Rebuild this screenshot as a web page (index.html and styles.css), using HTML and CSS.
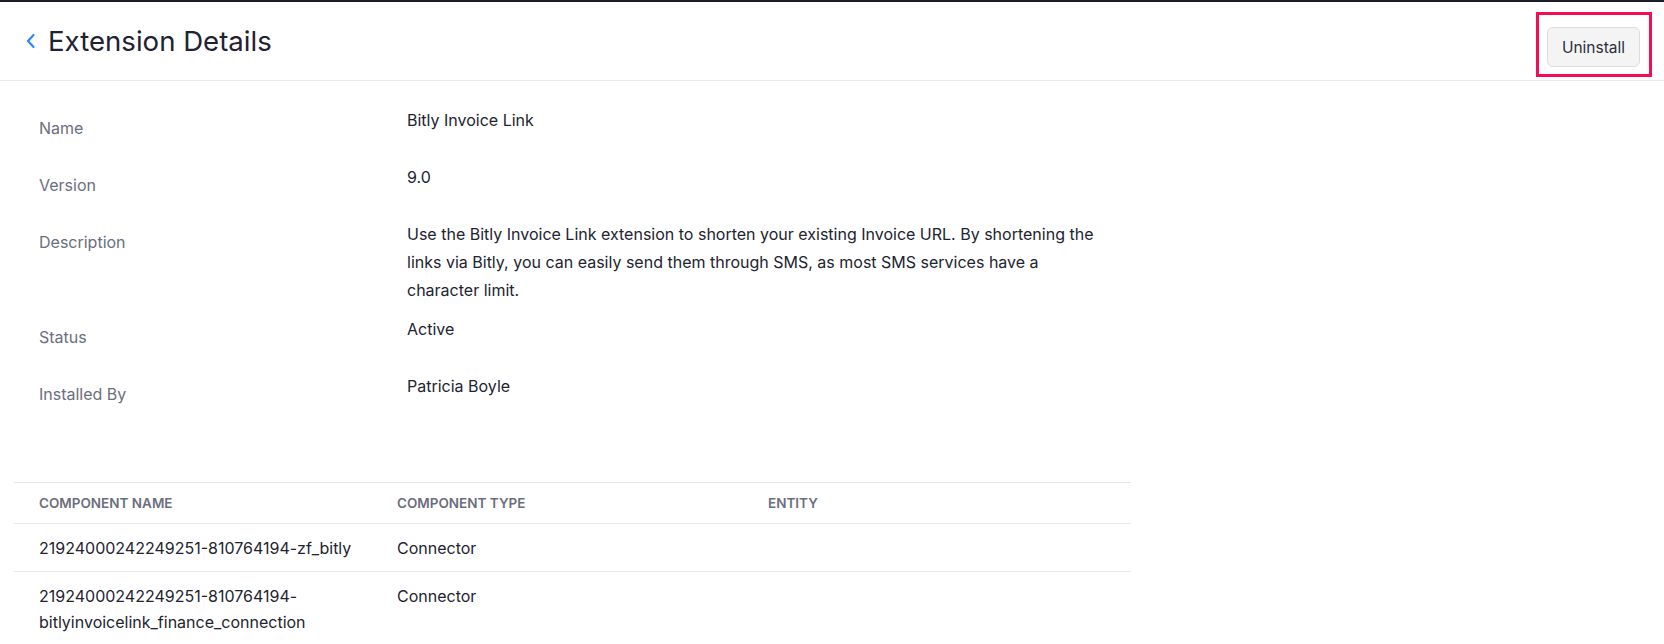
FILE: index.html
```html
<!DOCTYPE html>
<html>
<head>
<meta charset="utf-8">
<title>Extension Details</title>
<link rel="stylesheet" href="styles.css">
</head>
<body>
<div class="page">
  <header class="header">
    <div class="title-wrap">
      <svg class="back" width="12" height="16" viewBox="0 0 12 16"><path d="M8.5 2 L3 8 L8.5 14" fill="none" stroke="#2a8af5" stroke-width="2.2" stroke-linecap="round" stroke-linejoin="round"/></svg>
      <h1 class="title">Extension Details</h1>
    </div>
    <div class="btn-wrap">
      <button class="btn">Uninstall</button>
      <div class="highlight"></div>
    </div>
  </header>

  <section class="details">
    <div class="row"><div class="label">Name</div><div class="value">Bitly Invoice Link</div></div>
    <div class="row"><div class="label">Version</div><div class="value">9.0</div></div>
    <div class="row"><div class="label">Description</div><div class="value">Use the Bitly Invoice Link extension to shorten your existing Invoice URL. By shortening the links via Bitly, you can easily send them through SMS, as most SMS services have a character limit.</div></div>
    <div class="row"><div class="label">Status</div><div class="value">Active</div></div>
    <div class="row"><div class="label">Installed By</div><div class="value">Patricia Boyle</div></div>
  </section>

  <table class="table">
    <colgroup><col class="c1"><col class="c2"><col class="c3"></colgroup>
    <thead>
      <tr><th>Component Name</th><th>Component Type</th><th>Entity</th></tr>
    </thead>
    <tbody>
      <tr><td>21924000242249251-810764194-zf_bitly</td><td>Connector</td><td></td></tr>
      <tr><td>21924000242249251-810764194-bitlyinvoicelink_finance_connection</td><td>Connector</td><td></td></tr>
    </tbody>
  </table>
</div>
</body>
</html>
```
FILE: styles.css
```css
* { box-sizing: border-box; }
html, body { margin: 0; padding: 0; background: #fff; }
body {
  font-family: Inter, "Noto Sans", "Liberation Sans", sans-serif;
  color: #21242f;
  border-top: 2px solid #1b1e2a;
}
.header {
  display: flex;
  justify-content: space-between;
  align-items: flex-start;
  height: 79px;
  border-bottom: 1px solid #ebebef;
  padding: 0 24px 0 25px;
}
.title-wrap {
  display: flex;
  align-items: center;
  padding-top: 22px;
}
.back { display: block; margin-right: 11px; }
.title {
  margin: 0;
  font-size: 27.6px;
  font-weight: 400;
  line-height: 34px;
  color: #1f2230;
}
.btn-wrap {
  position: relative;
  margin-top: 25px;
}
.btn {
  display: block;
  width: 93px;
  height: 40px;
  background: #f4f4f5;
  border: 1px solid #dcdcdf;
  border-radius: 6px;
  font-family: Inter, "Noto Sans", sans-serif;
  font-size: 15.5px;
  color: #2b2e3c;
  padding: 0;
}
.highlight {
  position: absolute;
  top: -15px; left: -11px; right: -12px; bottom: -10px;
  border: 3px solid #f50c52;
}
.details {
  padding: 25px 0 0 39px;
  width: 1112px;
}
.row {
  display: flex;
  min-height: 46px;
  margin-bottom: 11px;
}
.label {
  width: 368px;
  flex: none;
  padding-top: 12px;
  line-height: 20px;
  font-size: 16px;
  color: #6a6e7e;
}
.value {
  flex: 1;
  font-size: 16px;
  line-height: 28px;
  color: #21242f;
}
.table {
  margin: 64px 0 0 14px;
  width: 1117px;
  border-collapse: collapse;
  table-layout: fixed;
}
.c1 { width: 358px; }
.c2 { width: 371px; }
.c3 { width: 388px; }
.table th {
  text-align: left;
  text-transform: uppercase;
  font-size: 13.5px;
  font-weight: 600;
  color: #6b6e7e;
  line-height: 16px;
  padding: 12px 5px 12px 25px;
  border-top: 1px solid #e6e6ec;
  border-bottom: 1px solid #e6e6ec;
}
.table td {
  font-size: 16px;
  line-height: 26px;
  padding: 11px 5px 10px 25px;
  border-bottom: 1px solid #e6e6ec;
  vertical-align: top;
  color: #21242f;
  word-break: break-word;
}
```
